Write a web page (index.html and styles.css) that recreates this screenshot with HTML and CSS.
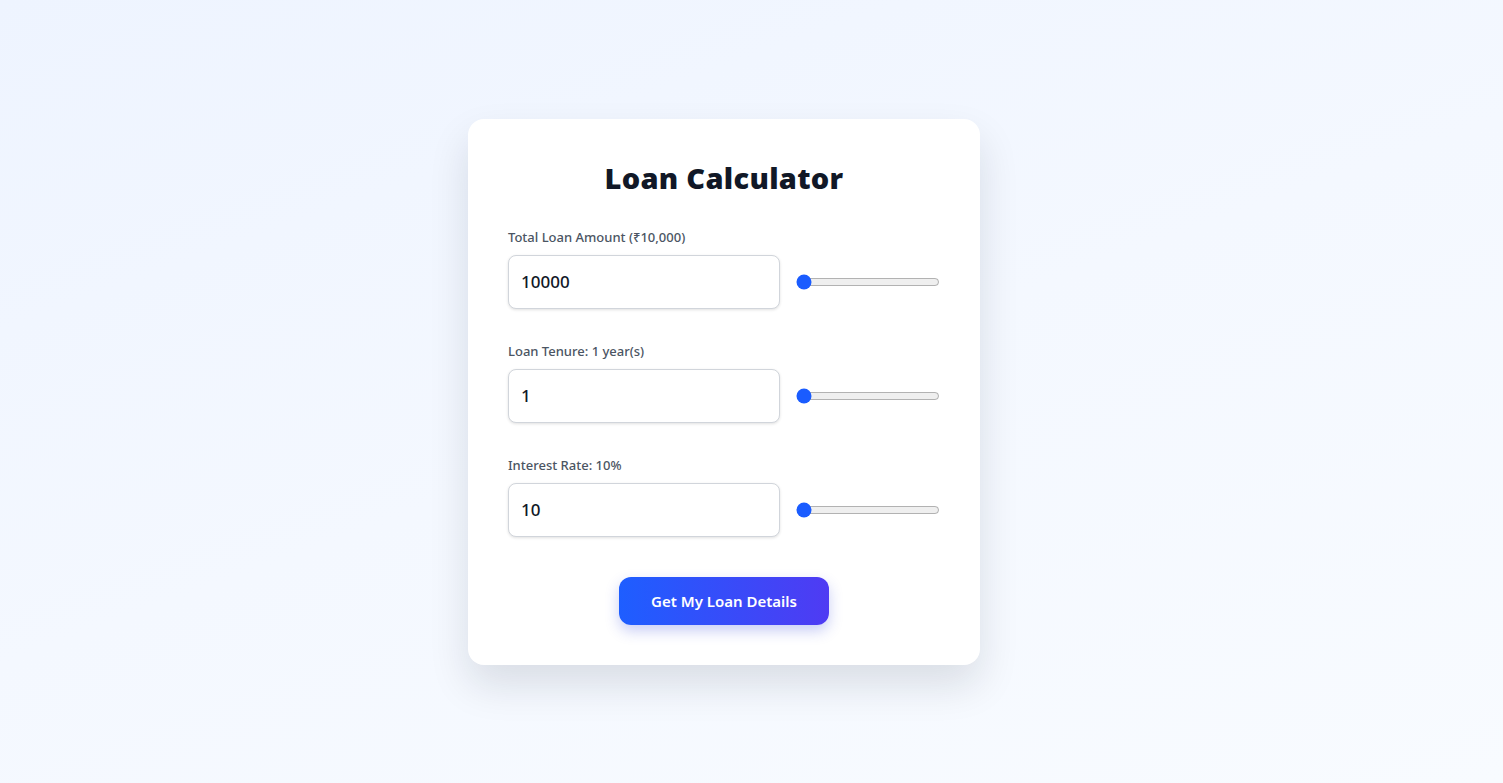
FILE: index.html
```html
<!DOCTYPE html>
<html>
<head>
<meta charset="utf-8">
<link rel="stylesheet" href="styles.css">
</head>
<body>
<div class="page">
  <div class="card">
    <h1 class="title">Loan Calculator</h1>
    <div class="field">
      <label class="label">Total Loan Amount (₹10,000)</label>
      <div class="row">
        <input class="num" type="text" value="10000">
        <input class="range" type="range" min="10000" max="1000000" value="10000">
      </div>
    </div>
    <div class="field">
      <label class="label">Loan Tenure: 1 year(s)</label>
      <div class="row">
        <input class="num" type="text" value="1">
        <input class="range" type="range" min="1" max="30" value="1">
      </div>
    </div>
    <div class="field">
      <label class="label">Interest Rate: 10%</label>
      <div class="row">
        <input class="num" type="text" value="10">
        <input class="range" type="range" min="10" max="30" value="10">
      </div>
    </div>
    <div class="actions">
      <button class="btn">Get My Loan Details</button>
    </div>
  </div>
</div>
</body>
</html>
```
FILE: styles.css
```css
html, body {
  margin: 0;
  height: 100%;
}
body {
  font-family: "Segoe UI", "Noto Sans", "Open Sans", sans-serif;
  background: linear-gradient(160deg, #eef4ff 0%, #f4f8ff 50%, #f8fbff 100%);
  color: #111827;
}
.page {
  height: 100%;
  display: flex;
  align-items: center;
  justify-content: center;
  padding-right: 55px;
  box-sizing: border-box;
}
.card {
  width: 512px;
  box-sizing: border-box;
  padding: 40px;
  background: #fff;
  border-radius: 16px;
  box-shadow: 0 20px 40px rgba(15, 23, 42, 0.12);
}
.title {
  margin: 0 0 28px;
  text-align: center;
  font-size: 29px;
  line-height: 38px;
  padding-bottom: 2px;
  font-weight: 900;
  letter-spacing: 0.3px;
  color: #111827;
}
.field {
  margin-bottom: 32px;
}
.label {
  display: block;
  font-size: 13px;
  line-height: 20px;
  font-weight: 500;
  color: #4b5563;
  margin-bottom: 8px;
}
.row {
  display: flex;
  align-items: center;
  gap: 16px;
}
.num {
  flex: 1;
  min-width: 0;
  height: 54px;
  box-sizing: border-box;
  padding: 0 12px;
  border: 1px solid #d1d5db;
  border-radius: 8px;
  box-shadow: 0 1px 3px rgba(0, 0, 0, 0.12);
  font-family: inherit;
  font-size: 17px;
  font-weight: 500;
  color: #111827;
  outline: none;
  background: #fff;
}
.range {
  width: 144px;
  margin: 0;
  accent-color: #1a5cff;
}
.actions {
  display: flex;
  justify-content: center;
  margin-top: 40px;
}
.btn {
  width: 210px;
  height: 48px;
  border: none;
  border-radius: 12px;
  background: linear-gradient(90deg, #1e5eff 0%, #4f3bf3 100%);
  color: #fff;
  font-family: inherit;
  font-size: 15px;
  font-weight: 600;
  box-shadow: 0 6px 14px rgba(40, 60, 220, 0.25);
  cursor: pointer;
}
```
